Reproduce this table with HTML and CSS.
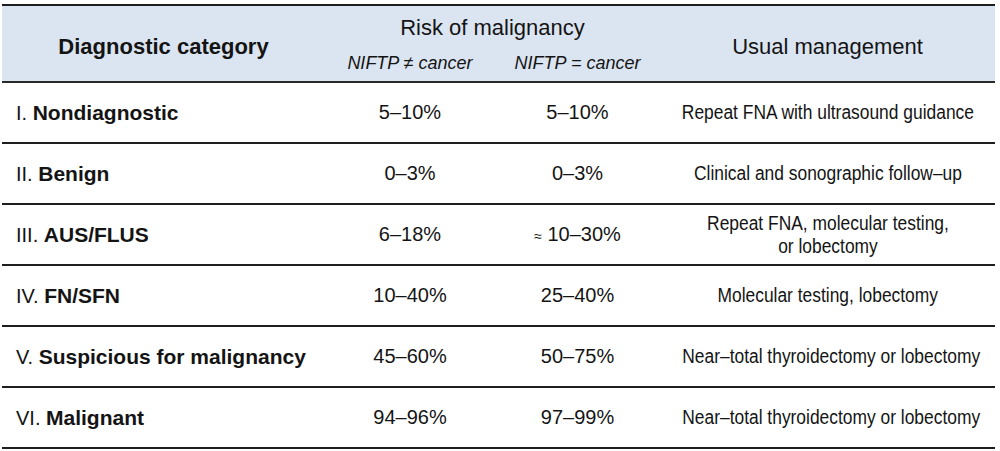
FILE: index.html
```html
<!DOCTYPE html>
<html>
<head>
<meta charset="utf-8">
<link rel="stylesheet" href="styles.css">
</head>
<body>
<table class="tbl">
  <colgroup>
    <col class="c1"><col class="c2"><col class="c3"><col class="c4">
  </colgroup>
  <thead>
    <tr class="h1">
      <th rowspan="2" class="hcat">Diagnostic category</th>
      <th colspan="2" class="hrisk">Risk of malignancy</th>
      <th rowspan="2" class="hman">Usual management</th>
    </tr>
    <tr class="h2">
      <th class="sub">NIFTP ≠ cancer</th>
      <th class="sub">NIFTP = cancer</th>
    </tr>
  </thead>
  <tbody>
    <tr>
      <td class="cat">I. <b>Nondiagnostic</b></td>
      <td class="num">5–10%</td>
      <td class="num">5–10%</td>
      <td class="man"><span class="narrow">Repeat FNA with ultrasound guidance</span></td>
    </tr>
    <tr>
      <td class="cat">II. <b>Benign</b></td>
      <td class="num">0–3%</td>
      <td class="num">0–3%</td>
      <td class="man"><span class="narrow">Clinical and sonographic follow–up</span></td>
    </tr>
    <tr>
      <td class="cat">III. <b>AUS/FLUS</b></td>
      <td class="num">6–18%</td>
      <td class="num"><span class="approx">≈</span> 10–30%</td>
      <td class="man"><span class="narrow">Repeat FNA, molecular testing,<br>or lobectomy</span></td>
    </tr>
    <tr>
      <td class="cat">IV. <b>FN/SFN</b></td>
      <td class="num">10–40%</td>
      <td class="num">25–40%</td>
      <td class="man"><span class="narrow">Molecular testing, lobectomy</span></td>
    </tr>
    <tr>
      <td class="cat">V. <b>Suspicious for malignancy</b></td>
      <td class="num">45–60%</td>
      <td class="num">50–75%</td>
      <td class="man"><span class="narrow">Near–total thyroidectomy or lobectomy</span></td>
    </tr>
    <tr>
      <td class="cat">VI. <b>Malignant</b></td>
      <td class="num">94–96%</td>
      <td class="num">97–99%</td>
      <td class="man"><span class="narrow">Near–total thyroidectomy or lobectomy</span></td>
    </tr>
  </tbody>
</table>
</body>
</html>
```

FILE: styles.css
```css
html, body {
  margin: 0;
  padding: 0;
  background: #ffffff;
}
body {
  padding: 4px 0 0 2px;
  font-family: "Liberation Sans", Arial, sans-serif;
  color: #141414;
}
.tbl {
  border-collapse: collapse;
  width: 993px;
  table-layout: fixed;
}
.c1 { width: 323px; }
.c2 { width: 170px; }
.c3 { width: 165px; }
.c4 { width: 335px; }

thead tr.h1 th {
  border-top: 2px solid #1e1e1e;
}
thead tr th {
  background: #dbe5f1;
  font-weight: normal;
  padding: 0;
}
thead tr.h1 { height: 42px; }
thead tr.h2 { height: 35px; }
.hcat {
  font-weight: bold !important;
  font-size: 22px;
  border-bottom: 2px solid #2a2a2a;
  padding-top: 6px !important;
}
.hrisk {
  font-size: 22px;
  vertical-align: middle;
  padding-top: 2px !important;
}
.hman {
  font-size: 22px;
  border-bottom: 2px solid #2a2a2a;
  padding-top: 6px !important;
}
.sub {
  font-style: italic;
  font-size: 18px;
  border-bottom: 2px solid #2a2a2a;
  vertical-align: middle;
  padding-bottom: 2px !important;
}
tbody tr {
  height: 61px;
}
tbody td {
  border-bottom: 2px solid #1e1e1e;
  padding: 0;
  vertical-align: middle;
}
.cat {
  font-size: 20px;
  padding-left: 14px;
}
.cat b {
  font-weight: bold;
  font-size: 21px;
}
.num {
  font-size: 20px;
  text-align: center;
}
.approx {
  font-size: 14px;
}
.man {
  font-size: 20px;
  text-align: center;
  line-height: 23px;
  white-space: nowrap;
}
.narrow {
  display: inline-block;
  transform: scaleX(0.87);
  transform-origin: center;
}
```
